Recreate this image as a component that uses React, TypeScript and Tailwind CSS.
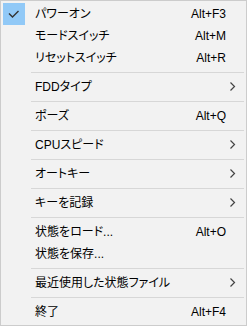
import React from "react";

type Item =
  | { type: "sep" }
  | { type: "item"; label: string; shortcut?: string; sub?: boolean; checked?: boolean };

const items: Item[] = [
  { type: "item", label: "パワーオン", shortcut: "Alt+F3", checked: true },
  { type: "item", label: "モードスイッチ", shortcut: "Alt+M" },
  { type: "item", label: "リセットスイッチ", shortcut: "Alt+R" },
  { type: "sep" },
  { type: "item", label: "FDDタイプ", sub: true },
  { type: "sep" },
  { type: "item", label: "ポーズ", shortcut: "Alt+Q" },
  { type: "sep" },
  { type: "item", label: "CPUスピード", sub: true },
  { type: "sep" },
  { type: "item", label: "オートキー", sub: true },
  { type: "sep" },
  { type: "item", label: "キーを記録", sub: true },
  { type: "sep" },
  { type: "item", label: "状態をロード...", shortcut: "Alt+O" },
  { type: "item", label: "状態を保存..." },
  { type: "sep" },
  { type: "item", label: "最近使用した状態ファイル", sub: true },
  { type: "sep" },
  { type: "item", label: "終了", shortcut: "Alt+F4" },
];

export default function App() {
  return (
    <div
      className="w-[247px] h-[326px] border border-[#cccccc] bg-[#f2f2f2] p-[2px] text-[12px] text-black [font-feature-settings:'palt']"
      style={{ fontFamily: '"Liberation Sans", "Noto Sans CJK JP", sans-serif' }}
    >
      {items.map((it, i) =>
        it.type === "sep" ? (
          <div key={i} className="h-[7px] flex items-center ml-[28px]">
            <div className="h-px w-full bg-[#d7d7d7]" />
          </div>
        ) : (
          <div key={i} className="h-[22px] flex items-center">
            <div className={`w-[22px] h-[22px] shrink-0 ${it.checked ? "bg-[#91c9f7]" : ""}`}>
              {it.checked && (
                <svg width="22" height="22" viewBox="0 0 22 22">
                  <path d="M6 10.5 L9.5 14 L15.5 8" fill="none" stroke="#333" strokeWidth="1.4" />
                </svg>
              )}
            </div>
            <div className="ml-[10px] flex-1 leading-[22px] whitespace-nowrap">{it.label}</div>
            {it.shortcut && <div className="leading-[22px] whitespace-nowrap">{it.shortcut}</div>}
            <div className="w-[18px] h-[22px] shrink-0">
              {it.sub && (
                <svg width="18" height="22" viewBox="0 0 18 22">
                  <path d="M4.5 6.5 L8.5 10.5 L4.5 14.5" fill="none" stroke="#444" strokeWidth="1.2" />
                </svg>
              )}
            </div>
          </div>
        )
      )}
    </div>
  );
}
